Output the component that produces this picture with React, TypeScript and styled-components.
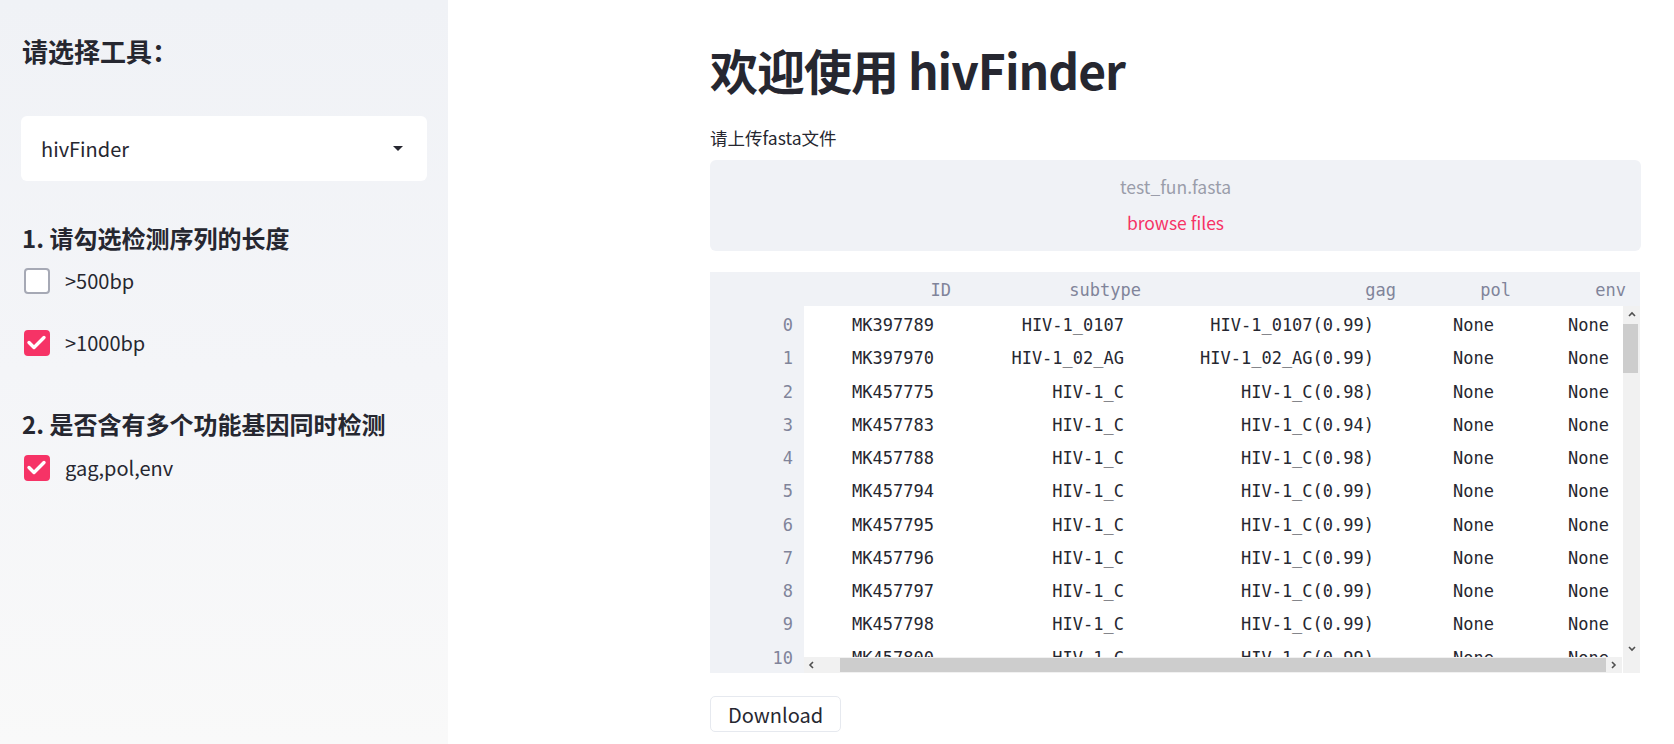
import React from "react";
import styled, { createGlobalStyle } from "styled-components";

const GlobalStyle = createGlobalStyle`
  html, body, #root { margin: 0; padding: 0; height: 100%; }
  body {
    overflow: hidden;
    background: #ffffff;
    color: #262730;
    font-family: "Noto Sans CJK SC", "Noto Sans", sans-serif;
  }
  * { box-sizing: border-box; }
`;

const Page = styled.div`
  display: flex;
  height: 100vh;
  width: 100%;
`;

const Sidebar = styled.aside`
  width: 448px;
  flex-shrink: 0;
  height: 100%;
  padding: 35px 21px 0 21px;
  background: linear-gradient(180deg, #f0f2f6 0%, #f4f5f8 50%, #f9f9f9 100%);
  display: flex;
  flex-direction: column;
`;

const SideTitle = styled.h2`
  margin: 0 0 0 1px;
  font-size: 26px;
  line-height: 32px;
  font-weight: 700;
  color: #262730;
`;

const Select = styled.div`
  margin-top: 49px;
  height: 65px;
  background: #ffffff;
  border-radius: 6px;
  display: flex;
  align-items: center;
  justify-content: space-between;
  padding: 0 24px 0 20px;
  font-size: 20px;
  color: #262730;
`;

const SectionHeading = styled.h3<{ $mt: number }>`
  margin: ${(p) => p.$mt}px 0 0 1px;
  font-size: 24px;
  line-height: 30px;
  font-weight: 700;
  color: #262730;
`;

const CheckRow = styled.label<{ $mt: number }>`
  margin-top: ${(p) => p.$mt}px;
  display: flex;
  align-items: center;
  gap: 15px;
  padding-left: 3px;
  height: 26px;
  font-size: 20px;
  line-height: 26px;
  color: #262730;
`;

const Box = styled.span<{ $checked: boolean }>`
  width: 26px;
  height: 26px;
  border-radius: 4px;
  flex-shrink: 0;
  display: flex;
  align-items: center;
  justify-content: center;
  background: ${(p) => (p.$checked ? "#f63366" : "#ffffff")};
  border: 2px solid ${(p) => (p.$checked ? "#f63366" : "#a6a9b5")};
`;

const Main = styled.main`
  flex: 1;
  min-width: 0;
  height: 100%;
  padding: 40px 33px 0 262px;
  display: flex;
  flex-direction: column;
`;

const Title = styled.h1`
  margin: 0;
  font-size: 48px;
  line-height: 58px;
  font-weight: 700;
  letter-spacing: -1px;
  color: #262730;
`;

const FieldLabel = styled.div`
  margin-top: 29px;
  font-size: 17.5px;
  line-height: 22px;
  color: #262730;
`;

const Uploader = styled.div`
  margin-top: 11px;
  height: 91px;
  background: #f0f2f6;
  border-radius: 6px;
  padding-top: 16px;
  display: flex;
  flex-direction: column;
  align-items: center;
  gap: 14px;
  font-size: 17.5px;
  line-height: 22px;
`;

const FileName = styled.div`
  color: #9a9daa;
`;

const Browse = styled.div`
  color: #f63366;
`;

const Frame = styled.div`
  margin-top: 21px;
  width: 930px;
  height: 401px;
  display: flex;
  flex-direction: column;
  font-family: "DejaVu Sans Mono", "Liberation Mono", monospace;
  font-size: 17px;
  overflow: hidden;
`;

const HeaderRow = styled.div`
  height: 34px;
  flex-shrink: 0;
  display: flex;
  background: #f0f2f6;
  color: #80849a;
`;

const IndexHead = styled.div`
  width: 94px;
  flex-shrink: 0;
`;

const HeadCell = styled.div<{ $w: number }>`
  width: ${(p) => p.$w}px;
  flex-shrink: 0;
  text-align: right;
  padding: 2px 10px 0 0;
  line-height: 32px;
  white-space: nowrap;
`;

const Body = styled.div`
  flex: 1;
  display: flex;
  min-height: 0;
`;

const IndexCol = styled.div`
  width: 94px;
  flex-shrink: 0;
  background: #f0f2f6;
  overflow: hidden;
  color: #80849a;
`;

const IndexCell = styled.div`
  height: 33.25px;
  padding: 5px 11px 0 0;
  line-height: 28.25px;
  text-align: right;
`;

const ScrollArea = styled.div`
  flex: 1;
  min-width: 0;
  display: grid;
  grid-template-columns: 1fr 17px;
  grid-template-rows: 1fr 16px;
  column-gap: 1px;
`;

const Viewport = styled.div`
  overflow: hidden;
  background: #ffffff;
  color: #262730;
`;

const DataRow = styled.div`
  display: flex;
  height: 33.25px;
  padding-top: 5px;
  line-height: 28.25px;
`;

const DataCell = styled.div<{ $w: number; $pad: number }>`
  width: ${(p) => p.$w}px;
  flex-shrink: 0;
  text-align: right;
  padding-right: ${(p) => p.$pad}px;
  white-space: nowrap;
`;

const VScroll = styled.div`
  grid-row: 1 / span 2;
  grid-column: 2;
  background: #f1f1f1;
  display: flex;
  flex-direction: column;
`;

const HScroll = styled.div`
  background: #f1f1f1;
  display: flex;
  align-items: stretch;
`;

const ArrowBtn = styled.div<{ $size: number }>`
  width: ${(p) => p.$size}px;
  height: ${(p) => p.$size}px;
  flex-shrink: 0;
  display: flex;
  align-items: center;
  justify-content: center;
`;

const VThumb = styled.div`
  margin: 1px 2px 0 0;
  height: 49px;
  background: #cdcdcd;
`;

const HThumb = styled.div`
  flex: 1;
  margin: 1px 0 1px 20px;
  background: #cdcdcd;
`;

const Spacer = styled.div`
  flex: 1;
`;

const Corner = styled.div`
  height: 16px;
  flex-shrink: 0;
`;

const DownloadButton = styled.button`
  margin-top: 23px;
  align-self: flex-start;
  width: 131px;
  height: 36px;
  background: #ffffff;
  border: 1px solid #e6e9ef;
  border-radius: 5px;
  font-family: "Noto Sans CJK SC", "Noto Sans", sans-serif;
  font-size: 20px;
  color: #262730;
  padding: 0;
  cursor: pointer;
`;

const columns = [
  { key: "ID", w: 157, pad: 27 },
  { key: "subtype", w: 190, pad: 27 },
  { key: "gag", w: 255, pad: 32 },
  { key: "pol", w: 115, pad: 27 },
  { key: "env", w: 115, pad: 27 },
];

const rows: string[][] = [
  ["MK397789", "HIV-1_0107", "HIV-1_0107(0.99)", "None", "None"],
  ["MK397970", "HIV-1_02_AG", "HIV-1_02_AG(0.99)", "None", "None"],
  ["MK457775", "HIV-1_C", "HIV-1_C(0.98)", "None", "None"],
  ["MK457783", "HIV-1_C", "HIV-1_C(0.94)", "None", "None"],
  ["MK457788", "HIV-1_C", "HIV-1_C(0.98)", "None", "None"],
  ["MK457794", "HIV-1_C", "HIV-1_C(0.99)", "None", "None"],
  ["MK457795", "HIV-1_C", "HIV-1_C(0.99)", "None", "None"],
  ["MK457796", "HIV-1_C", "HIV-1_C(0.99)", "None", "None"],
  ["MK457797", "HIV-1_C", "HIV-1_C(0.99)", "None", "None"],
  ["MK457798", "HIV-1_C", "HIV-1_C(0.99)", "None", "None"],
  ["MK457800", "HIV-1_C", "HIV-1_C(0.99)", "None", "None"],
];

const Check = () => (
  <svg width="22" height="22" viewBox="0 0 22 22">
    <polyline points="3,10.5 8,15.5 18,5.5" fill="none" stroke="#ffffff" strokeWidth="3.4" strokeLinecap="round" strokeLinejoin="round" />
  </svg>
);

const Caret = () => (
  <svg width="10" height="5" viewBox="0 0 10 5">
    <polygon points="0,0 10,0 5,5" fill="#262730" />
  </svg>
);

const Chevron = ({ dir }: { dir: "up" | "down" | "left" | "right" }) => {
  const pts: Record<string, string> = {
    up: "1,5 4,2 7,5",
    down: "1,2 4,5 7,2",
    left: "5,1 2,4 5,7",
    right: "2,1 5,4 2,7",
  };
  return (
    <svg width="8" height="8" viewBox="0 0 8 8">
      <polyline points={pts[dir]} fill="none" stroke="#505050" strokeWidth="1.6" />
    </svg>
  );
};

const CheckItem = ({ label, checked, mt }: { label: string; checked: boolean; mt: number }) => (
  <CheckRow $mt={mt}>
    <Box $checked={checked}>{checked && <Check />}</Box>
    <span>{label}</span>
  </CheckRow>
);

export default function App() {
  return (
    <>
      <GlobalStyle />
      <Page>
        <Sidebar>
          <SideTitle>请选择工具：</SideTitle>
          <Select>
            <span>hivFinder</span>
            <Caret />
          </Select>
          <SectionHeading $mt={42}>1. 请勾选检测序列的长度</SectionHeading>
          <CheckItem label=">500bp" checked={false} mt={15} />
          <CheckItem label=">1000bp" checked={true} mt={36} />
          <SectionHeading $mt={53}>2. 是否含有多个功能基因同时检测</SectionHeading>
          <CheckItem label="gag,pol,env" checked={true} mt={16} />
        </Sidebar>
        <Main>
          <Title>欢迎使用 hivFinder</Title>
          <FieldLabel>请上传fasta文件</FieldLabel>
          <Uploader>
            <FileName>test_fun.fasta</FileName>
            <Browse>browse files</Browse>
          </Uploader>
          <Frame>
            <HeaderRow>
              <IndexHead />
              {columns.map((c) => (
                <HeadCell key={c.key} $w={c.w}>
                  {c.key}
                </HeadCell>
              ))}
            </HeaderRow>
            <Body>
              <IndexCol>
                {rows.map((_, i) => (
                  <IndexCell key={i}>{i}</IndexCell>
                ))}
              </IndexCol>
              <ScrollArea>
                <Viewport>
                  {rows.map((r, i) => (
                    <DataRow key={i}>
                      {r.map((v, j) => (
                        <DataCell key={j} $w={columns[j].w} $pad={columns[j].pad}>
                          {v}
                        </DataCell>
                      ))}
                    </DataRow>
                  ))}
                </Viewport>
                <VScroll>
                  <ArrowBtn $size={17}>
                    <Chevron dir="up" />
                  </ArrowBtn>
                  <VThumb />
                  <Spacer />
                  <ArrowBtn $size={17}>
                    <Chevron dir="down" />
                  </ArrowBtn>
                  <Corner />
                </VScroll>
                <HScroll>
                  <ArrowBtn $size={16}>
                    <Chevron dir="left" />
                  </ArrowBtn>
                  <HThumb />
                  <ArrowBtn $size={16}>
                    <Chevron dir="right" />
                  </ArrowBtn>
                </HScroll>
              </ScrollArea>
            </Body>
          </Frame>
          <DownloadButton>Download</DownloadButton>
        </Main>
      </Page>
    </>
  );
}
